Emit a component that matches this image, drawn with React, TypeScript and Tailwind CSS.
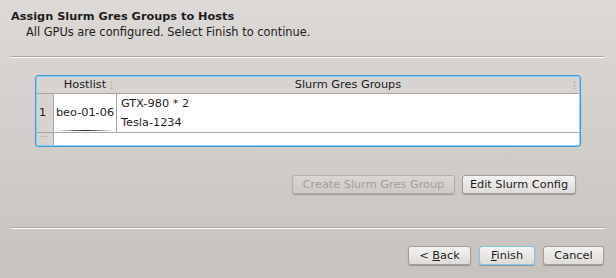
import React from "react";

const Btn = ({
  children,
  disabled,
  focused,
  className = "",
}: {
  children: React.ReactNode;
  disabled?: boolean;
  focused?: boolean;
  className?: string;
}) => (
  <button
    className={`h-[19px] rounded-[3px] border text-[11.3px] leading-none shadow-[0_1px_1px_rgba(0,0,0,0.25)] bg-gradient-to-b ${
      disabled
        ? "border-[#b4afab] from-[#d9d6d3] to-[#cdc9c5] text-[#a29e9a]"
        : "from-[#f4f3f2] to-[#dedbd8] text-[#1d1d1d]"
    } ${focused ? "border-[#7cc6ef]" : disabled ? "" : "border-[#a29d99]"} ${className}`}
  >
    {children}
  </button>
);

export default function App() {
  return (
    <div
      className="w-[616px] h-[278px] bg-gradient-to-b from-[#dcd9d6] to-[#c7c2be] text-[#1d1d1d] flex flex-col overflow-hidden"
      style={{ fontFamily: '"DejaVu Sans", sans-serif' }}
    >
      {/* heading */}
      <div className="pl-[11px] pt-[10px] h-[56px]">
        <div className="text-[11.3px] font-bold leading-[14px]">Assign Slurm Gres Groups to Hosts</div>
        <div className="pl-[15px] text-[11.4px] leading-[15px] mt-[1px]">
          All GPUs are configured. Select Finish to continue.
        </div>
      </div>
      <div className="mx-[11px] w-[593px] h-[2px] border-t border-[#a9a4a1] border-b border-b-white" />

      {/* table */}
      <div className="ml-[35px] mt-[17px] w-[546px] h-[72px] rounded-[3px] border border-[#3b9bd8] shadow-[inset_0_0_0_1px_#92cdf0] p-[1px] flex flex-col">
        <div className="flex h-[17px] bg-[#d7d3d0] text-[11.3px] border-b border-[#a9a5a2]">
          <div className="w-[16px]" />
          <div className="w-[64px] relative flex items-center justify-center">
            Hostlist
            <span className="absolute right-[1px] top-[3px] text-[9px] leading-[10px] text-[#9d9995]">⋮</span>
          </div>
          <div className="flex-1 relative flex items-center justify-center">
            Slurm Gres Groups
            <span className="absolute right-[0px] top-[3px] text-[9px] leading-[10px] text-[#9d9995]">⋮</span>
          </div>
        </div>
        <div className="flex h-[39px] border-b border-[#a9a5a2]">
          <div className="w-[16px] bg-[#d7d3d0] text-[11.3px] flex items-center pl-[2px]">1</div>
          <div className="w-[64px] bg-white border-l border-[#a9a5a2] border-r flex flex-col items-center justify-center relative">
            <span className="text-[11.3px]">beo-01-06</span>
            <div className="absolute bottom-[1px] left-[2px] right-[2px] h-[1px] bg-gradient-to-r from-transparent via-[#1c1c1c] to-transparent" />
          </div>
          <div className="flex-1 bg-white pl-[4px] text-[11.3px] leading-[19px] flex flex-col justify-center">
            <div>GTX-980 * 2</div>
            <div>Tesla-1234</div>
          </div>
        </div>
        <div className="flex flex-1">
          <div className="w-[16px] bg-[#d7d3d0] text-[7px] text-[#8f8b88] pl-[3px] leading-[8px]">···</div>
          <div className="flex-1 bg-white border-l border-[#a9a5a2]" />
        </div>
      </div>

      {/* action buttons */}
      <div className="flex justify-end gap-[7px] pr-[40px] mt-[28px]">
        <Btn disabled className="w-[163px]">Create Slurm Gres Group</Btn>
        <Btn className="w-[114px]">Edit Slurm Config</Btn>
      </div>

      <div className="mx-[11px] mt-[33px] w-[594px] h-[2px] border-t border-[#a9a4a1] border-b border-b-white" />

      {/* wizard buttons */}
      <div className="flex justify-end gap-[8px] pr-[12px] mt-[17px]">
        <Btn className="w-[63px]">
          &lt; <span className="underline">B</span>ack
        </Btn>
        <Btn focused className="w-[56px]">
          <span className="underline">F</span>inish
        </Btn>
        <Btn className="w-[61px]">Cancel</Btn>
      </div>
    </div>
  );
}
